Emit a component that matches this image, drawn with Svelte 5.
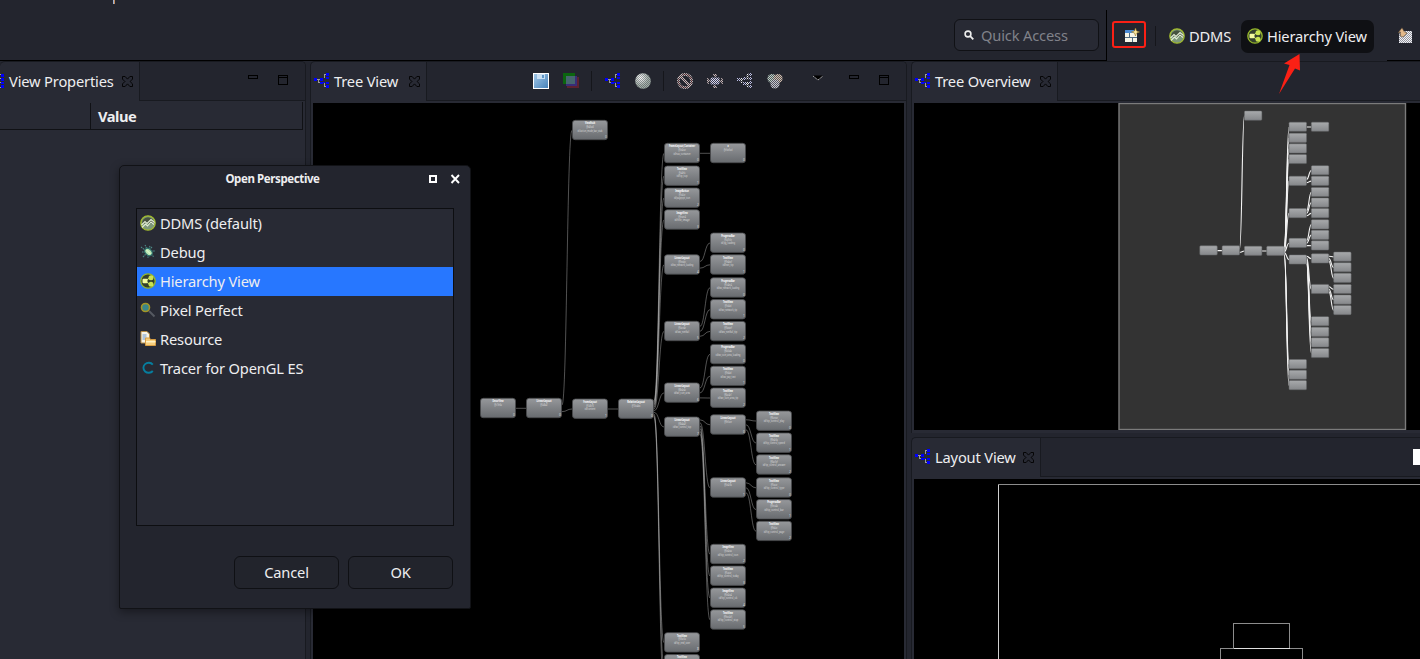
<script>
  const W = 36, H = 20;
  // id, x, y, parent, class name, address, resource id, index
  const nodes = [
    ['a', 480, 398.3, null, 'DecorView', '@c1fe6a', '', 0],
    ['b', 526, 398.3, 'a', 'LinearLayout', '@5a8a41', '', 0],
    ['r', 572, 120.3, 'b', 'ViewStub', '@b4faa6', 'id/action_mode_bar_stub', 0],
    ['c', 572, 399, 'b', 'FrameLayout', '@1a8e76', 'id/content', 1],
    ['d', 618, 399, 'c', 'RelativeLayout', '@10ca4ea', '', 0],
    ['e1', 664, 143.3, 'd', 'FrameLayout_Container', '@5e4cae', 'id/nav_container', 0],
    ['e2', 664, 166, 'd', 'TextView', '@a4efa', 'id/tip_top', 1],
    ['e3', 664, 188, 'd', 'ImageButton', '@5e4ce', 'id/pageppt_icon', 2],
    ['e4', 664, 209.8, 'd', 'ImageView', '@feaec4', 'id/title_image', 3],
    ['e5', 664, 254.8, 'd', 'LinearLayout', '@9ecabc', 'id/wv_network_loading', 4],
    ['e6', 664, 321.3, 'd', 'LinearLayout', '@5ace4e', 'id/wv_netfail', 5],
    ['e7', 664, 382.9, 'd', 'LinearLayout', '@8e4e4c', 'id/wv_coin_area', 6],
    ['e8', 664, 417, 'd', 'LinearLayout', '@8a4a4f', 'id/wv_control_top', 7],
    ['e9', 664, 632.7, 'd', 'TextView', '@3fac5a', 'id/tip_end_over', 8],
    ['e10', 664, 654.6, 'd', 'TextView', '@10e2ac', 'id/tip_next', 9],
    ['e11', 664, 676, 'd', 'TextView', '@10e2ab', 'id/tip_last', 10],
    ['f1', 710, 143.3, 'e1', 'a', '@cfae5ad', '', 0],
    ['g1', 710, 233, 'e5', 'ProgressBar', '@5a9c5e', 'id/pg_loading', 0],
    ['g2', 710, 254.8, 'e5', 'TextView', '@9e4eaf', 'id/net_tip', 1],
    ['h1', 710, 277.8, 'e6', 'ProgressBar', '@5c4ec4', 'id/wv_network_loading', 0],
    ['h2', 710, 299.6, 'e6', 'TextView', '@5e4ad', 'id/wv_network_tip', 1],
    ['h3', 710, 321.4, 'e6', 'TextView', '@9aeaef', 'id/wv_netfail_tip', 2],
    ['i1', 710, 344.4, 'e7', 'ProgressBar', '@6a5a4a', 'id/wv_coin_area_loading', 0],
    ['i2', 710, 366.2, 'e7', 'TextView', '@9e4ad', 'id/wv_pay_text', 1],
    ['i3', 710, 388, 'e7', 'TextView', '@6ac4e1', 'id/wv_coin_area_tip', 2],
    ['j1', 710, 414.8, 'e8', 'LinearLayout', '@9e5ace', '', 0],
    ['k1', 756, 411, 'j1', 'TextView', '@9aecae', 'id/tip_control_play', 0],
    ['k2', 756, 433, 'j1', 'TextView', '@9e4c5a', 'id/tip_control_speed', 1],
    ['k3', 756, 454.8, 'j1', 'TextView', '@6ac5ef', 'id/tip_control_answer', 2],
    ['j2', 710, 477.8, 'e8', 'LinearLayout', '@5e4c9a', '', 1],
    ['l1', 756, 477.8, 'j2', 'TextView', '@9acae', 'id/tip_control_type', 0],
    ['l2', 756, 499.6, 'j2', 'ProgressBar', '@9eca4a', 'id/tip_control_bar', 1],
    ['l3', 756, 521.2, 'j2', 'TextView', '@9e4ac', 'id/tip_control_page', 2],
    ['m1', 710, 544.3, 'e8', 'ImageView', '@5e4caa', 'id/tip_control_icon', 2],
    ['m2', 710, 566, 'e8', 'TextView', '@5acae', 'id/tip_control_today', 3],
    ['m3', 710, 588, 'e8', 'ImageView', '@5e4ca4', 'id/tip_control_ok', 4],
    ['m4', 710, 609.8, 'e8', 'TextView', '@9eac4e5', 'id/tip_control_stop', 5]
  ].map(([id, x, y, parent, cls, addr, res, idx]) => ({ id, x, y, parent, cls, addr, res, idx }));

  const byId = Object.fromEntries(nodes.map((n) => [n.id, n]));
  const edges = nodes.filter((n) => n.parent).map((n) => {
    const p = byId[n.parent];
    const kids = nodes.filter((k) => k.parent === n.parent);
    const sx = p.x + W;
    const sy = p.y + (H * (kids.indexOf(n) + 1)) / (kids.length + 1);
    const ey = n.y + H / 2;
    const mx = (sx + n.x) / 2;
    return `M${sx} ${sy}C${mx} ${sy} ${mx} ${ey} ${n.x} ${ey}`;
  });

  // Text lines of a node that fit above the canvas' lower edge
  const lines = (n) => [
    { t: n.cls, y: n.y + 3.8, w: 1.25, b: true },
    { t: n.addr, y: n.y + 7.7, w: 1.08 },
    { t: n.res, y: n.y + 11.4, w: 1.08 }
  ].filter((l) => l.t && l.y < 658.5);

  const perspectives = [
    ['ddms', 'DDMS (default)'],
    ['bug', 'Debug'],
    ['hier', 'Hierarchy View'],
    ['lens', 'Pixel Perfect'],
    ['res', 'Resource'],
    ['gl', 'Tracer for OpenGL ES']
  ];
</script>

{#snippet tree()}
  <svg class="ic" width="16" height="16" viewBox="0 0 16 16" shape-rendering="crispEdges">
    <path d="M3 6.500h3M4.500 6v4M4 9.500h2M10.500 1v4M10 1.500h2M10.500 10v4M10 13.500h2" fill="none" stroke="#9a9a9a" />
    <path d="M0 5h3v3H0zM6 5h3v3H6zM9 9h2v1H9zM6 9h3v2H6zM12 0h3v3h-3zM12 4h3v2h-3zM12 9h3v2h-3zM12 12h3v3h-3z" fill="#0000fb" />
  </svg>
{/snippet}

{#snippet close()}
  <svg class="x" width="11" height="11" viewBox="0 0 11 11">
    <path d="M.5.5h2.600l2.400 2.600L7.900.5h2.600v2.600L8.100 5.500l2.400 2.400v2.600H7.900L5.500 7.900l-2.400 2.600H.5V7.900l2.400-2.400L.5 3.100z" fill="none" stroke="#050506" />
  </svg>
{/snippet}

{#snippet minmax()}
  <svg class="mm" width="42" height="12" viewBox="0 0 42 12" shape-rendering="crispEdges">
    <path d="M.5 1.500h9v3h-9zM30.500 1.500h9v9h-9zM31 3.500h8" fill="none" stroke="#000" />
  </svg>
{/snippet}

{#snippet icon(kind)}
  <svg class="ic" width="16" height="16" viewBox="0 0 16 16">
    {#if kind === 'ddms'}
      <circle cx="8" cy="8" r="7.200" fill="#7d987a" stroke="#a3bd2c" stroke-width="1.300" />
      <path d="M2 8.500a6 6.200 0 0 1 12 0z" fill="#46523f" />
      <path d="M1.500 10l3.500-3.500 2 2L11 4.500l3.500 3M2 12.500l3.500-3.500 2 2L11 7l3 2.500" fill="none" stroke="#e4eed7" stroke-width="1.100" />
    {:else if kind === 'hier'}
      <circle cx="8" cy="8" r="7.200" fill="#34402c" stroke="#96b82a" stroke-width="1.300" />
      <path d="M5 8l6-4M5 8l6 4" stroke="#d5eb78" />
      <rect x="2.500" y="5.700" width="5" height="4.600" rx="1" fill="#f2fa9e" />
      <circle cx="11" cy="4.700" r="2.500" fill="#c9e353" /><circle cx="11" cy="11.300" r="2.500" fill="#c9e353" />
    {:else if kind === 'bug'}
      <path d="M1 3l4 3M5 1l2 4M10 2l-1 3M2 8h3M3 13l3-3M8 11v3M11 10l3 3M11 7h4M12 3l-3 3" stroke="#4e8b88" stroke-width="1.100" stroke-dasharray="1.500 .7" />
      <ellipse cx="8.500" cy="8" rx="4.200" ry="3" transform="rotate(45 8.500 8)" fill="#b8e5b2" stroke="#2c716c" />
      <path d="M6.500 6l4 4" stroke="#edffd6" />
    {:else if kind === 'lens'}
      <path d="M9 9l5.500 5.500" stroke="#555961" stroke-width="2" />
      <circle cx="5.500" cy="5.500" r="4" fill="#39868a" stroke="#a49525" stroke-width="1.600" />
    {:else if kind === 'res'}
      <path d="M1 .5h6l2.500 2.500v9H1z" fill="#f6f3e8" stroke="#b98d45" />
      <path d="M2.500 4h4M2.500 6h4M2.500 8h3" stroke="#6c95c7" />
      <path d="M5.500 7h4l1 1.500h5v6h-10z" fill="#f8cf7d" stroke="#d99e43" />
      <path d="M6 10h9.500v1.500H6z" fill="#fff1c4" />
    {:else}
      <path d="M12.800 4.600A5.300 5 0 1 0 12.800 11" fill="none" stroke="#067e9f" stroke-width="1.900" />
    {/if}
  </svg>
{/snippet}

<div class="app">
  <header>
    <div class="left"><i></i></div>
    <div class="search">
      <svg width="10" height="10" viewBox="0 0 10 10"><circle cx="4" cy="4" r="2.900" fill="none" stroke="#eee" stroke-width="1.600" /><path d="M6.200 6.200L9.300 9.300" stroke="#eee" stroke-width="1.800" /></svg>
      <span>Quick Access</span>
    </div>
    <div class="persp">
      <div class="mark">
        <svg width="16" height="16" viewBox="0 0 16 16">
          <path d="M1 3h12v11H1z" fill="#f6f4e7" /><path d="M1 2h9v3H1z" fill="#4d8bd3" />
          <path d="M1 9.500h12M5.500 5v4.500M8.500 9.500V14" stroke="#506a80" />
          <path d="M11.500 0l1 3 3 1-3 1-1 3-1-3-3-1 3-1z" fill="#ffeaa0" stroke="#9b7a28" stroke-width=".6" />
        </svg>
      </div>
      <i class="sep"></i>
      <div class="p">{@render icon('ddms')}<span>DDMS</span></div>
      <div class="p on">{@render icon('hier')}<span>Hierarchy View</span></div>
      <svg class="cut" width="16" height="17" viewBox="0 0 16 17">
        <defs><pattern id="ck" width="2" height="2" patternUnits="userSpaceOnUse"><path d="M0 0h1v1H0zM1 1h1v1H1z" fill="#23252e" /></pattern></defs>
        <path d="M3 4h12v12H2V9z" fill="#f2f3f8" /><path d="M3 4h12v12H2V9z" fill="url(#ck)" opacity=".45" />
        <path d="M3.500 9V5L1 6 5 .8l2.500 4.200L10 6 6 10z" fill="#e3b98a" stroke="#574634" stroke-width=".6" />
      </svg>
    </div>
    <div class="tail"></div>
  </header>

  <main>
    <section class="view props">
      <div class="bar">
        <div class="tab"><svg class="grid" width="4" height="16" viewBox="0 0 4 16" shape-rendering="crispEdges"><path d="M1 1h3v3H1zM1 5h3v3H1zM1 9h3v2H1zM1 12h3v3H1z" fill="#0000fb" /><path d="M0 1.500h1M0 5.500h1M0 9.500h1M0 14.500h1" stroke="#a2a2a2" /></svg><span>View Properties</span>{@render close()}</div>
        <div class="rest">{@render minmax()}</div>
      </div>
      <div class="th"><span></span><b>Value</b></div>
    </section>

    <section class="view mid">
      <div class="bar">
        <div class="tab">{@render tree()}<span>Tree View</span>{@render close()}</div>
        <div class="rest">
          <div class="tools">
            <svg width="16" height="16" viewBox="0 0 16 16"><defs><linearGradient id="fd" x2="1" y2="1"><stop offset="0" stop-color="#a5cbea" /><stop offset="1" stop-color="#4580b8" /></linearGradient></defs><rect x=".5" y=".5" width="15" height="15" fill="url(#fd)" stroke="#fff" /><rect x="4" y="1" width="8" height="5" fill="#c9e0f4" /><rect x="9" y="2" width="2" height="3" fill="#5f97c8" /></svg>
            <svg width="16" height="16" viewBox="0 0 16 16"><path d="M0 0h12v11H0z" fill="#0b650f" /><path d="M4 4h12v11H4z" fill="#5c2231" /><path d="M3 3h11v10H3z" fill="#382d78" /><path d="M3 3h9v8H3z" fill="#46656e" /></svg>
            <i class="sep"></i>
            {@render tree()}
            <svg width="16" height="16" viewBox="0 0 16 16"><defs><radialGradient id="gl" cx=".35" cy=".3"><stop offset="0" stop-color="#fff" /><stop offset="1" stop-color="#a3b0a9" /></radialGradient></defs><circle cx="8" cy="8" r="7.800" fill="url(#gl)" /><circle cx="8" cy="8" r="7.800" fill="url(#ck)" opacity=".4" /></svg>
            <i class="sep"></i>
            <svg width="16" height="16" viewBox="0 0 16 16"><circle cx="8" cy="8" r="6.600" fill="none" stroke="#cfc4c4" stroke-width="2.800" /><circle cx="8" cy="8" r="6.600" fill="none" stroke="#b98080" stroke-width="1" /><path d="M4 4l8 8" stroke="#cdb8b8" stroke-width="2.800" /><rect width="16" height="16" fill="url(#ck)" opacity=".85" /></svg>
            <svg width="16" height="16" viewBox="0 0 16 16"><path d="M4 5h8v6H4z" fill="#d6d6f4" stroke="#c9c9ea" /><path d="M6 2h4M8 1v3M1 5v6M0 8h4M12 8h4M15 5v6M8 12v3M6 14h4" stroke="#d8c4c4" stroke-width="1.500" /><rect width="16" height="16" fill="url(#ck)" opacity=".85" /></svg>
            <svg width="16" height="16" viewBox="0 0 16 16"><path d="M3 7h3M4.500 5v5M10.500 1v5M10 1.500h2M10.500 9v5M10 13.500h2M9 5.500h3M9 10.500h3" fill="none" stroke="#eee" stroke-width="1.500" /><path d="M0 5h3v3H0zM6 4h3v3H6zM6 9h3v3H6zM12 0h3v3h-3zM12 4h3v3h-3zM12 8h3v3h-3zM12 12h3v3h-3z" fill="#b9bbe2" /><rect width="16" height="16" fill="url(#ck)" /></svg>
            <svg width="16" height="16" viewBox="0 0 16 16"><circle cx="5" cy="5.500" r="4.600" fill="#bccfc5" /><circle cx="11" cy="5.500" r="4.600" fill="#d0bdae" /><circle cx="8" cy="11" r="4.600" fill="#c5c6d0" /><rect width="16" height="16" fill="url(#ck)" opacity=".7" /></svg>
          </div>
          <svg class="drop" width="12" height="6" viewBox="0 0 12 6"><path d="M1 .5h10L6 5z" fill="#000" /><path d="M1 1l5 4 5-4" fill="none" stroke="#aaa" stroke-dasharray="1.500 .6" /></svg>
          {@render minmax()}
        </div>
      </div>
      <div class="canvas">
        <svg width="591" height="556" viewBox="313 103 591 556">
          <defs>
            <linearGradient id="ng" x2="0" y2="1"><stop offset="0" stop-color="#96989b" /><stop offset="1" stop-color="#686b6f" /></linearGradient>
          </defs>
          {#each edges as d}<path {d} fill="none" stroke="#c4c4c4" stroke-opacity=".52" stroke-width=".8" />{/each}
          {#each nodes as n}
            <rect x={n.x + .5} y={n.y} width={W - 1} height={H - .6} rx="2.800" fill="url(#ng)" stroke="#4a4b4e" stroke-width=".8" />
            <g text-anchor="middle" class="nt">
              {#each lines(n) as l}
                <text class:nb={l.b} x={n.x + 18} y={l.y} textLength={l.t.length * l.w} lengthAdjust="spacingAndGlyphs">{l.t}</text>
              {/each}
              {#if n.y < 640}<text x={n.x + 34} y={n.y + 17.700}>{n.idx}</text>{/if}
            </g>
          {/each}
        </svg>
      </div>
    </section>

    <div class="side">
      <section class="view over">
        <div class="bar">
          <div class="tab">{@render tree()}<span>Tree Overview</span>{@render close()}</div>
          <div class="rest"></div>
        </div>
        <div class="canvas">
          <svg width="506" height="327" viewBox="914 103 506 327">
            <defs><linearGradient id="og" x2="0" y2="1"><stop offset="0" stop-color="#a8aaac" /><stop offset="1" stop-color="#85878a" /></linearGradient></defs>
            <rect x="1119" y="103.500" width="286.500" height="326" fill="#333" stroke="#7b7b7b" stroke-width="1.400" />
            <g transform="translate(1199.800 111) scale(.485) translate(-480 -120.300)">
              {#each edges as d}<path {d} fill="none" stroke="#f4f4f4" stroke-width="2.300" />{/each}
              {#each nodes as n}<rect x={n.x} y={n.y} width={W} height={H - 1} rx="2" fill="url(#og)" stroke="#66686a" stroke-width="1" />{/each}
            </g>
          </svg>
        </div>
      </section>
      <section class="view lay">
        <div class="bar">
          <div class="tab">{@render tree()}<span>Layout View</span>{@render close()}</div>
          <div class="rest"><i class="white"></i></div>
        </div>
        <div class="canvas">
          <svg width="506" height="180" viewBox="914 479 506 180" fill="none" shape-rendering="crispEdges">
            <path d="M998.500 659V484.500" stroke="#d0d0d0" /><path d="M998 484.500h422" stroke="#8c8c8c" />
            <path d="M1233.500 648v-24.500h56V648" stroke="#8c8c8c" />
            <path d="M1220.500 659v-10.500h82V659" stroke="#8c8c8c" /><path d="M1234 648.500h56" stroke="#e0e0e0" />
          </svg>
        </div>
      </section>
    </div>
  </main>

  <svg class="arrow" width="26" height="44" viewBox="0 0 26 44"><path d="M21.500 1L22 17.500 17 15.500 1 41 11.500 12 6 10.500z" fill="#fb2015" /></svg>

  <div class="dialog">
    <div class="title">
      <b>Open Perspective</b>
      <svg width="32" height="10" viewBox="0 0 32 10"><path d="M1 2h6v6H1z" fill="none" stroke="#fff" stroke-width="2" /><path d="M22.500 1L30 9M30 1L22.500 9" stroke="#fff" stroke-width="1.900" /></svg>
    </div>
    <ul>
      {#each perspectives as [k, name]}
        <li class:sel={k === 'hier'}>{@render icon(k)}<span>{name}</span></li>
      {/each}
    </ul>
    <div class="btns"><button>Cancel</button><button>OK</button></div>
  </div>
</div>

<style>
  :global(body) { margin: 0; background: #23252e; overflow: hidden; }
  .app { position: relative; width: 1420px; height: 659px; overflow: hidden; background: #23252e; color: #eeeef0; font: 14.667px/20px "Noto Sans", "Open Sans", sans-serif; letter-spacing: -.16px; }
  .app *, .app ::before { box-sizing: border-box; }
  svg { display: block; flex: none; }
  header { display: flex; height: 61px; }
  .left { width: 954px; flex: none; border-bottom: 1px solid #000; }
  .left i { display: block; width: 2px; height: 4px; margin-left: 113px; background: linear-gradient(90deg, #9bb4d6 50%, #c58a58 50%); }
  .search { width: 152px; flex: none; border-bottom: 1px solid #000; display: flex; align-items: center; gap: 7px; position: relative; padding: 10px 0 0 10px; }
  .search::before { content: ''; position: absolute; left: 0; top: 19px; width: 145px; height: 32px; background: #282a34; border: 1px solid #101115; border-radius: 6px; }
  .search svg, .search span { position: relative; }
  .search span { color: #80828a; }
  .persp { width: 281px; border-left: 1px solid #000; margin-top: 10px; padding-top: 10px; display: flex; align-items: flex-start; flex: none; }
  .persp > * { flex: none; }
  .persp .mark { width: 34px; height: 27px; margin: 1px 0 0 5px; border: 2px solid #fb2015; border-radius: 3px; padding: 5px 0 0 10px; }
  .persp .sep { margin: 6px 13px 0 9px; }
  .sep { width: 1px; height: 20px; background: #15161b; display: block; }
  .p { display: flex; align-items: center; gap: 4px; height: 33px; width: 72px; white-space: nowrap; }
  .p.on { width: 133px; padding-left: 6px; background: #0f1014; border-radius: 7px; }
  .p .ic { margin-top: -2px; }
  .p span { margin-top: -1px; }
  .cut { margin: 7px 0 0 23px; }
  .tail { flex: 1; border-bottom: 1px solid #000; }

  main { display: grid; grid-template-columns: 306px 597px 509px; column-gap: 4px; height: 598px; }
  .view { display: flex; flex-direction: column; background: #282a34; border: 1px solid #181a20; border-bottom: 0; border-radius: 5px 5px 0 0; min-width: 0; overflow: hidden; }
  .bar { display: flex; height: 39px; flex: none; }
  .tab { display: flex; align-items: center; flex: none; border-right: 1px solid #181a20; white-space: nowrap; padding-bottom: 2px; }
  .tab .x { margin: 1px 6px 0 auto; }
  .tab .ic { margin-right: 4px; }
  .rest { flex: 1; background: #23252e; border-bottom: 1px solid #181a20; display: flex; align-items: flex-start; justify-content: flex-end; }
  .props { border-left: 0; }
  .props .tab { width: 140px; }
  .grid { margin-right: 5px; }
  .mm { margin: 12px 15px 0 0; }
  .th { display: flex; height: 28px; margin: 1px 2px 0 0; border: solid #101115; border-width: 0 1px 1px 0; align-items: center; padding-top: 1px; }
  .th span { width: 91px; height: 26px; border-right: 1px solid #101115; }
  .th b { margin-left: 7px; letter-spacing: -.5px; }
  .mid .tab { width: 116px; padding-left: 3px; }
  .mid .canvas { margin: 2px 2px 0; }
  .canvas { background: #000; flex: 1; overflow: hidden; }
  .nt { font: 3.200px "Noto Sans", sans-serif; fill: #dedede; letter-spacing: 0; }
  .nb { font-weight: 700; fill: #fff; }
  .tools { display: flex; gap: 14px; margin: 9px 29px 0 0; align-items: center; }
  .tools .sep { margin: 0 -1px 0 -2px; }
  .tools .ic { margin: 0; }
  .drop { margin: 13px 25px 0 0; }
  .side { display: flex; flex-direction: column; gap: 4px; }
  .side .view { border-right: 0; border-radius: 5px 0 0; }
  .side .canvas { margin: 2px 0 0 2px; }
  .over { height: 372px; flex: none; }
  .over .canvas { flex: none; height: 327px; }
  .over .tab { width: 146px; padding-left: 3px; }
  .lay { flex: 1; }
  .lay .tab { width: 129px; padding-left: 3px; }
  .white { width: 7px; height: 16px; background: #fff; margin-top: 11px; }

  .arrow { position: absolute; left: 1278px; top: 53px; }
  .dialog { position: absolute; left: 119px; top: 165px; width: 352px; height: 444px; background: #23252e; border: 1px solid #111216; border-radius: 5px 5px 2px 2px; padding: 0 17px 0 16px; box-shadow: 0 3px 10px #0006; }
  .title { height: 42px; display: flex; align-items: flex-start; padding-top: 3px; }
  .title b { width: 273px; flex: none; text-align: center; font-size: 11.500px; letter-spacing: -.4px; }
  .title svg { margin: 5px 0 0 20px; }
  ul { list-style: none; margin: 0; padding: 0; height: 318px; width: 318px; border: 1px solid #0d0e11; background: #282a34; }
  li { display: flex; align-items: center; gap: 4px; height: 29px; padding-left: 3px; }
  li .ic { margin-top: -2px; }
  li span { margin-top: -2px; }
  li.sel { background: #2777ff; }
  .btns { display: flex; gap: 9px; justify-content: flex-end; margin: 30px 0 0; }
  button { width: 105px; height: 33px; padding: 0 0 2px; color: inherit; font: inherit; letter-spacing: inherit; background: #22242c; border: 1px solid #0f1014; border-radius: 6px; }
</style>
